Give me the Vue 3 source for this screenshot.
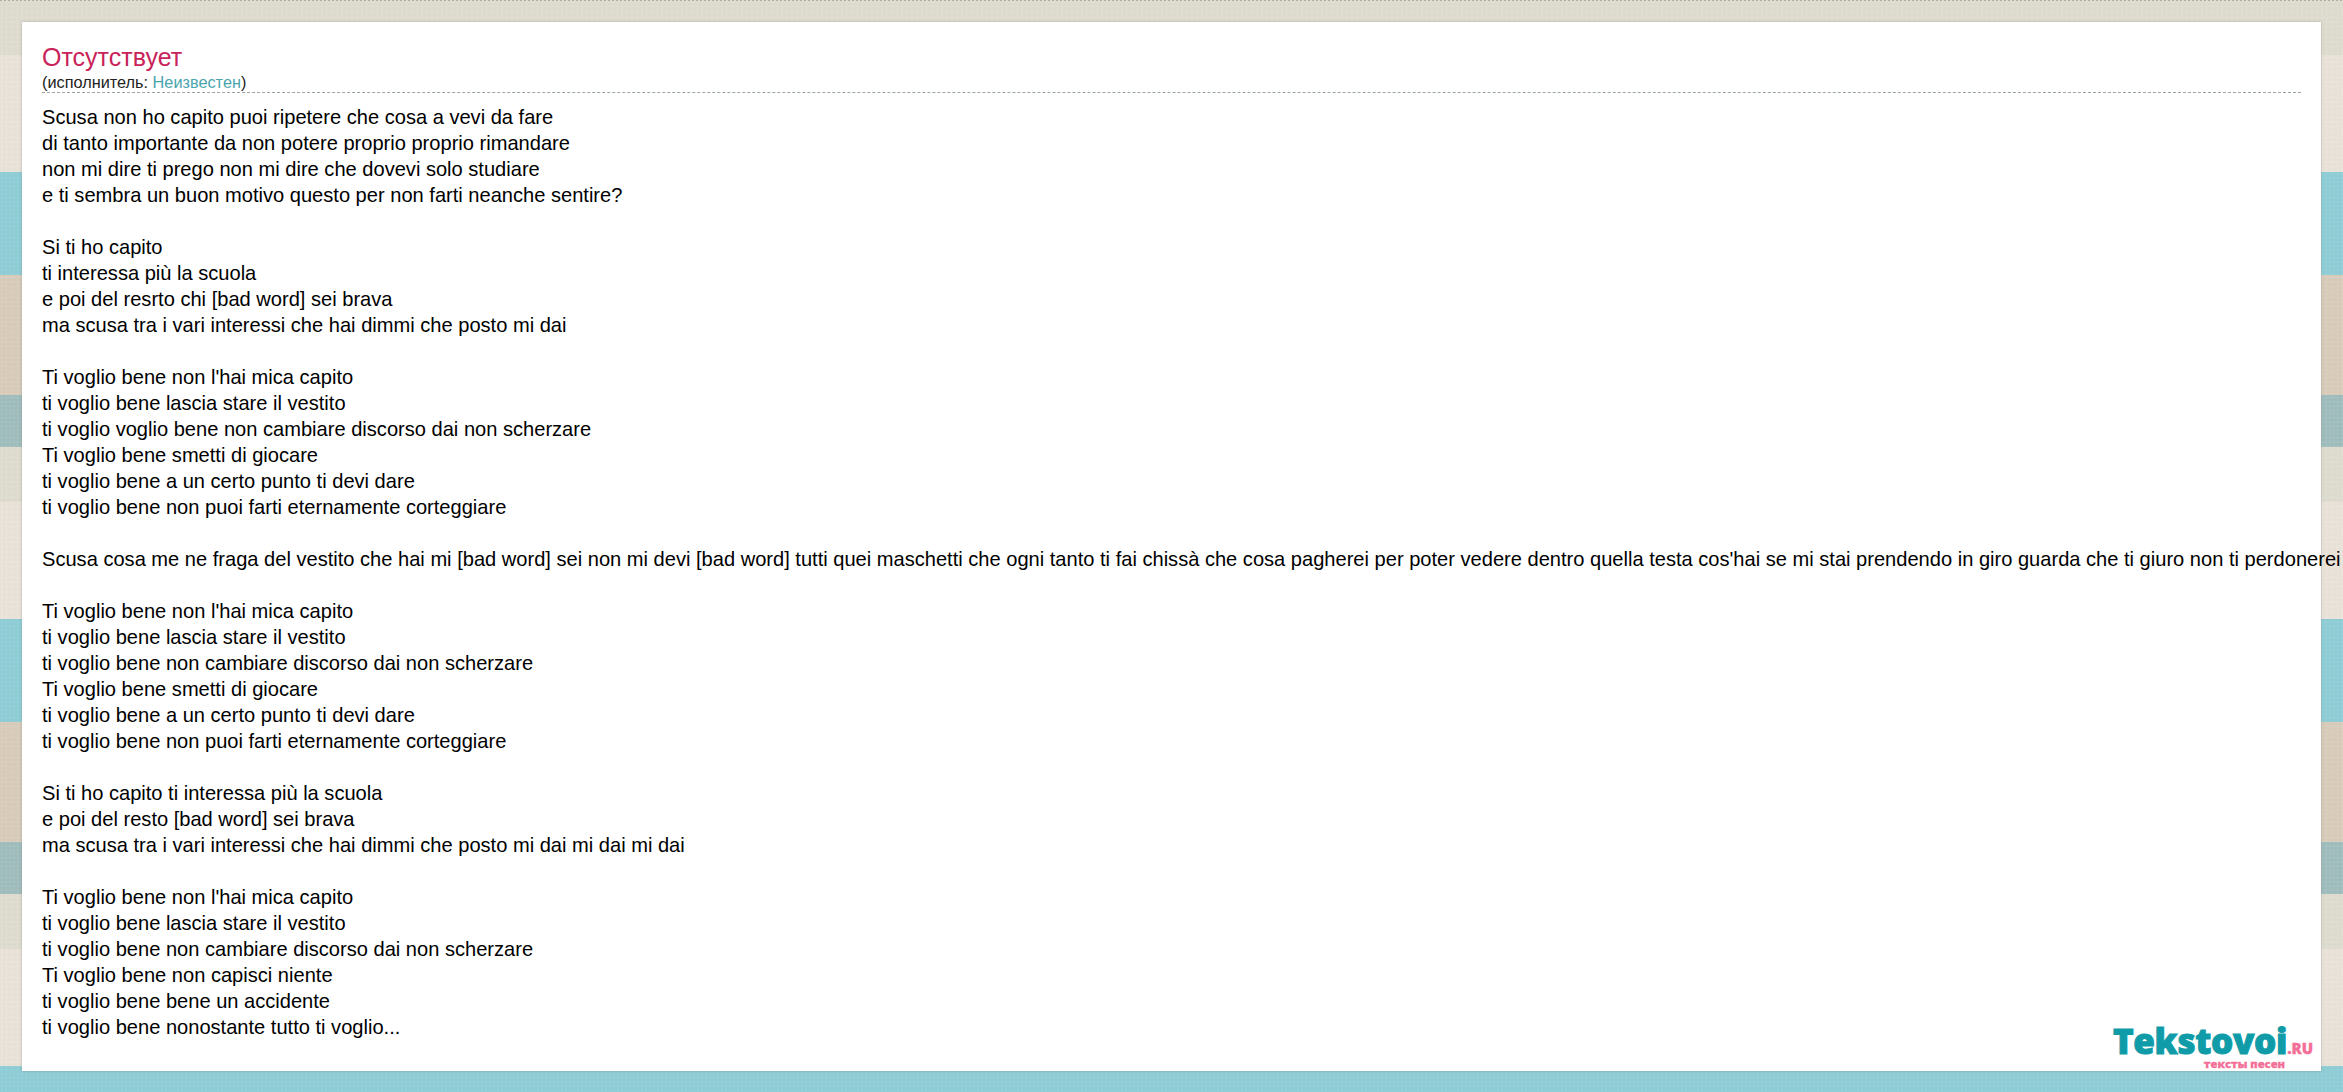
<script setup>
const stanzas = [
  ["Scusa non ho capito puoi ripetere che cosa a vevi da fare","di tanto importante da non potere proprio proprio rimandare","non mi dire ti prego non mi dire che dovevi solo studiare","e ti sembra un buon motivo questo per non farti neanche sentire?"],
  ["Si ti ho capito","ti interessa più la scuola","e poi del resrto chi [bad word] sei brava","ma scusa tra i vari interessi che hai dimmi che posto mi dai"],
  ["Ti voglio bene non l'hai mica capito","ti voglio bene lascia stare il vestito","ti voglio voglio bene non cambiare discorso dai non scherzare","Ti voglio bene smetti di giocare","ti voglio bene a un certo punto ti devi dare","ti voglio bene non puoi farti eternamente corteggiare"],
  ["Scusa cosa me ne fraga del vestito che hai mi [bad word] sei non mi devi [bad word] tutti quei maschetti che ogni tanto ti fai chissà che cosa pagherei per poter vedere dentro quella testa cos'hai se mi stai prendendo in giro guarda che ti giuro non ti perdonerei"],
  ["Ti voglio bene non l'hai mica capito","ti voglio bene lascia stare il vestito","ti voglio bene non cambiare discorso dai non scherzare","Ti voglio bene smetti di giocare","ti voglio bene a un certo punto ti devi dare","ti voglio bene non puoi farti eternamente corteggiare"],
  ["Si ti ho capito ti interessa più la scuola","e poi del resto [bad word] sei brava","ma scusa tra i vari interessi che hai dimmi che posto mi dai mi dai mi dai"],
  ["Ti voglio bene non l'hai mica capito","ti voglio bene lascia stare il vestito","ti voglio bene non cambiare discorso dai non scherzare","Ti voglio bene non capisci niente","ti voglio bene bene un accidente","ti voglio bene nonostante tutto ti voglio..."]
];
</script>

<template>
  <div class="page">
    <main class="card">
      <h1 class="title">Отсутствует</h1>
      <div class="artist">(исполнитель: <a class="link">Неизвестен</a>)</div>
      <div class="lyrics">
        <p v-for="(s, i) in stanzas" :key="i" class="stanza">
          <span v-for="(l, j) in s" :key="j" class="line">{{ l }}</span>
        </p>
      </div>
      <div class="logo">
        <div class="logo-main">Tekstovoi<span class="logo-ru">.RU</span></div>
        <div class="logo-sub">тексты песен</div>
      </div>
    </main>
  </div>
</template>

<style>
html, body { margin: 0; overflow: hidden; }
</style>

<style scoped>
.page {
  height: 1092px;
  box-sizing: border-box;
  padding: 22px 22px 21px;
  overflow: hidden;
  background-color: #e8e0d6;
  background-image:
    radial-gradient(circle, rgba(255,255,255,.07) 1px, transparent 1.2px),
    radial-gradient(circle, rgba(90,80,60,.03) 1px, transparent 1.2px),
    repeating-linear-gradient(to right, rgba(80,90,80,.35) 0, rgba(80,90,80,.35) 2px, transparent 2px, transparent 4px),
    repeating-linear-gradient(to bottom,
      #dedccf 0, #dedccf 55px,
      #e9e2d9 55px, #e9e2d9 172px,
      #8ecdd6 172px, #8ecdd6 275px,
      #d8cbba 275px, #d8cbba 395px,
      #9fbdbd 395px, #9fbdbd 447px);
  background-size: 4px 4px, 5px 5px, 100% 1px, 100% 100%;
  background-position: 0 0, 2px 2px, 0 0, 0 0;
  background-repeat: repeat, repeat, no-repeat, no-repeat;
}
.card {
  position: relative;
  height: 100%;
  box-sizing: border-box;
  padding: 21px 20px 0;
  background: #fff;
  box-shadow: 0 0 2px rgba(120,120,120,.6);
  font-family: "Liberation Sans", Arial, sans-serif;
  color: #000;
}
.title {
  margin: 0;
  font-size: 25px;
  line-height: 28px;
  font-weight: 400;
  color: #c9235a;
}
.artist {
  margin-top: 1px;
  font-size: 16.3px;
  line-height: 20px;
  color: #222;
  border-bottom: 1px dashed #9aa5a5;
}
.link { color: #4aa5ae; }
.lyrics { margin-top: 11px; font-size: 20.08px; line-height: 26px; white-space: nowrap; }
.stanza { margin: 0 0 26px; }
.line { display: block; }
.logo { position: absolute; right: 8px; bottom: 2px; text-align: right; }
.logo-main {
  font-family: "Open Sans", sans-serif;
  font-weight: 800;
  font-size: 35px;
  line-height: 22px;
  color: #0f9ca8;
  -webkit-text-stroke: 1px #0f9ca8;
  letter-spacing: -.3px;
}
.logo-ru { font-size: 15px; color: #f36f97; -webkit-text-stroke: .4px #f36f97; letter-spacing: 0; }
.logo-sub {
  font-family: "Open Sans", sans-serif;
  font-weight: 800;
  font-size: 11.2px;
  line-height: 10px;
  color: #f36f97;
  -webkit-text-stroke: .3px #f36f97;
  text-align: right;
  padding-right: 28px;
}
</style>
